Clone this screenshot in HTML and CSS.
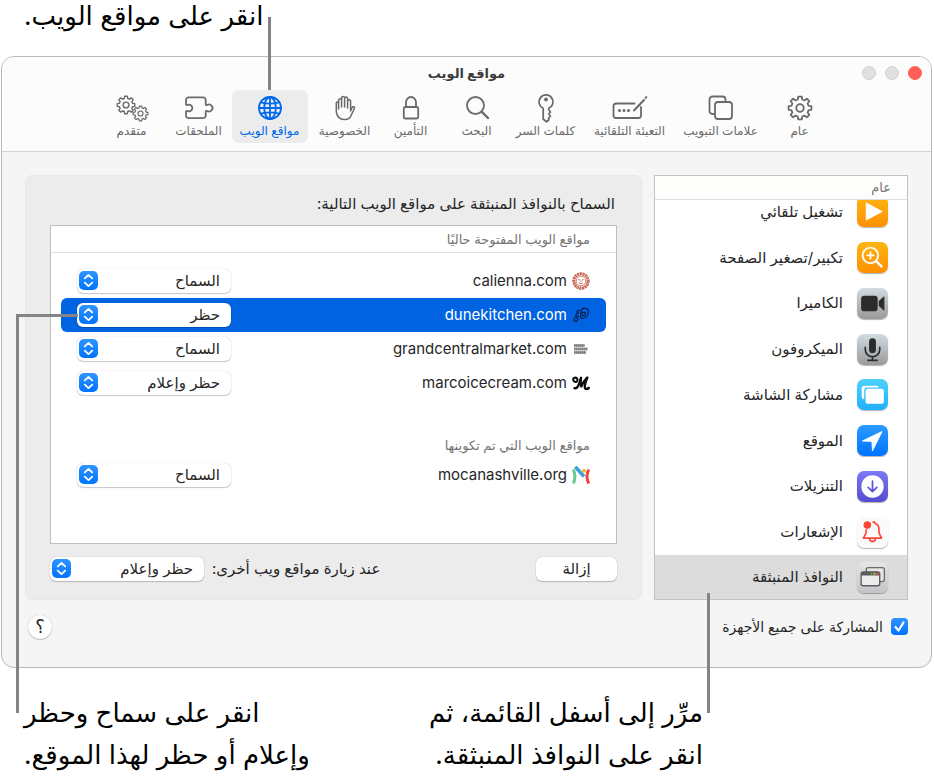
FILE: index.html
```html
<!DOCTYPE html>
<html lang="ar" dir="rtl">
<head>
<meta charset="utf-8">
<title>مواقع الويب</title>
<link rel="stylesheet" href="styles.css">
</head>
<body>
<svg class="defs" aria-hidden="true">
  <symbol id="gear" viewBox="-13 -13 26 26">
    <path d="M8.5-2.2 11.4-1.8V1.8L8.5 2.2A8.8 8.8 0 0 1 7.6 4.4L9.3 6.8 6.8 9.3 4.4 7.6A8.8 8.8 0 0 1 2.2 8.5L1.8 11.4H-1.8L-2.2 8.5A8.8 8.8 0 0 1-4.4 7.6L-6.8 9.3-9.3 6.8-7.6 4.4A8.8 8.8 0 0 1-8.5 2.2L-11.4 1.8V-1.8L-8.5-2.2A8.8 8.8 0 0 1-7.6-4.4L-9.3-6.8-6.8-9.3-4.4-7.6A8.8 8.8 0 0 1-2.2-8.5L-1.8-11.4H1.8L2.2-8.5A8.8 8.8 0 0 1 4.4-7.6L6.8-9.3 9.3-6.8 7.6-4.4A8.8 8.8 0 0 1 8.5-2.2Z"/>
    <circle r="3.8"/>
  </symbol>
  <symbol id="stepper" viewBox="0 0 19 19">
    <path d="M5.8 7.4 9.5 3.9l3.7 3.5M5.8 11.6l3.7 3.5 3.7-3.5" fill="none" stroke="#fff" stroke-width="1.8" stroke-linecap="round" stroke-linejoin="round"/>
  </symbol>
</svg>

<figure class="figure">
  <p class="callout callout-top">انقر على مواقع الويب.</p>

  <main class="window">
    <header class="titlebar">
      <h1>مواقع الويب</h1>
      <div class="lights"><i class="light close"></i><i class="light"></i><i class="light"></i></div>
      <nav class="tabs">
        <button class="tab" type="button">
          <svg class="line" width="28" height="28" viewBox="0 0 28 28"><use href="#gear" x="1" y="1" width="26" height="26"/></svg>
          <span>عام</span>
        </button>
        <button class="tab" type="button">
          <svg class="line" width="28" height="28" viewBox="0 0 28 28"><path d="M7.500 20H5.500A3 3 0 0 1 2.500 17V5.500A3 3 0 0 1 5.500 2.500H15.500A3 3 0 0 1 18.500 5.500V7.500"/><rect x="8" y="8" width="17" height="17" rx="3"/></svg>
          <span>علامات التبويب</span>
        </button>
        <button class="tab" type="button">
          <svg class="line" width="36" height="28" viewBox="0 0 36 28"><path d="M22.500 9.500H4A2.500 2.500 0 0 0 1.500 12V21.500A2.500 2.500 0 0 0 4 24H26.500A2.500 2.500 0 0 0 29 21.500V13"/><path d="m22 16.500 10-10.500M33.500 3.900l.8-.8" stroke-width="2"/><g class="solid"><circle cx="7.500" cy="16.500" r="1.500"/><circle cx="12" cy="16.500" r="1.500"/><circle cx="16.500" cy="16.500" r="1.500"/></g></svg>
          <span>التعبئة التلقائية</span>
        </button>
        <button class="tab" type="button">
          <svg class="line" width="20" height="30" viewBox="0 0 20 30"><path d="M7.200 15.300A7 7 0 1 1 12.800 15.300V17L14.500 19 12.700 21l1.700 2-1.700 2V27L10.500 28.800 7.200 26Z"/><circle class="solid" cx="10" cy="6.500" r="1.900"/></svg>
          <span>كلمات السر</span>
        </button>
        <button class="tab" type="button">
          <svg class="line" width="28" height="28" viewBox="0 0 28 28"><circle cx="12.500" cy="11.500" r="8.500"/><path d="m19 18 6 6" stroke-width="2.400"/></svg>
          <span>البحث</span>
        </button>
        <button class="tab" type="button">
          <svg class="line" width="28" height="28" viewBox="0 0 28 28"><rect x="6.800" y="13" width="14.400" height="11.500" rx="1.500"/><path d="M9 13V8.500a5 5.500 0 0 1 10 0V13"/></svg>
          <span>التأمين</span>
        </button>
        <button class="tab" type="button">
          <svg class="line" width="28" height="28" viewBox="0 0 28 28"><path stroke-width="1.500" d="M7.600 15V6.200a1.500 1.500 0 0 1 3 0V13 4a1.500 1.500 0 0 1 3 0V13 4.500a1.500 1.500 0 0 1 3 0V14 7.200a1.500 1.500 0 0 1 3 0V17l1.400-3.300c.8-1.700 3-1 2.400.8L20.300 21c-1 3-3 4.600-6.200 4.600-4.500 0-8.800-2.500-8.800-8.600V8.800a1.200 1.200 0 0 1 2.300 0"/></svg>
          <span>الخصوصية</span>
        </button>
        <button class="tab selected" type="button" aria-pressed="true">
          <svg class="line" width="28" height="28" viewBox="0 0 28 28"><circle cx="14" cy="14" r="11"/><ellipse cx="14" cy="14" rx="5.800" ry="11"/><path d="M14 3V25M3 14H25M5 8.300Q14 11 23 8.300M5 19.700Q14 17 23 19.700"/></svg>
          <span>مواقع الويب</span>
        </button>
        <button class="tab" type="button">
          <svg class="line" width="32" height="28" viewBox="0 0 32 28"><path d="M3 10.500V6A2.700 2.700 0 0 1 5.700 3.300H20A2.700 2.700 0 0 1 22.700 6V10.300Q22.800 11.500 24.200 11A3.500 3.500 0 1 1 24.200 17Q22.800 16.500 22.700 17.700V21.500A2.700 2.700 0 0 1 20 24.200H5.700A2.700 2.700 0 0 1 3 21.500V17.500Q3.300 16.500 4.800 17.200A3.400 3.400 0 1 0 4.800 10.800Q3.300 11.500 3 10.500Z"/></svg>
          <span>الملحقات</span>
        </button>
        <button class="tab" type="button">
          <svg class="line" width="34" height="28" viewBox="0 0 34 28"><use href="#gear" x="1" y="1" width="20" height="20"/><use href="#gear" x="17" y="11" width="17" height="17"/></svg>
          <span>متقدم</span>
        </button>
      </nav>
    </header>

    <div class="content">
      <aside class="sidebar">
        <h2>عام</h2>
        <div class="clip">
          <ul class="items">
            <li><svg class="app orange" viewBox="0 0 30 30"><path d="M9 7v16L24 15Z" fill="#fff" stroke="#fff" stroke-linejoin="round"/></svg><span>تشغيل تلقائي</span></li>
            <li><svg class="app orange" viewBox="0 0 30 30"><g fill="none" stroke="#fff" stroke-width="1.800" stroke-linecap="round"><circle cx="13" cy="13" r="7.500"/><path d="M13 10v6M10 13h6"/><path d="m18.700 18.700 5 5" stroke-width="2.400"/></g></svg><span>تكبير/تصغير الصفحة</span></li>
            <li><svg class="app gray" viewBox="0 0 30 30"><rect x="4" y="7.500" width="16" height="15" rx="3" fill="#2b2b2b"/><path d="m21.500 13 4.500-4.200v12.400L21.500 17Z" fill="#2b2b2b" stroke="#2b2b2b" stroke-linejoin="round"/></svg><span>الكاميرا</span></li>
            <li><svg class="app gray" viewBox="0 0 30 30"><rect x="11.700" y="4" width="6.600" height="14.500" rx="3.300" fill="#2b2b2b"/><path d="M8 13v2a7 7 0 0 0 14 0v-2M15 22v3.500M10.500 25.500h9" fill="none" stroke="#2b2b2b" stroke-width="1.600" stroke-linecap="round"/></svg><span>الميكروفون</span></li>
            <li><svg class="app sky" viewBox="0 0 30 30"><path d="M6.500 19.500A2.500 2.500 0 0 1 4.500 17V9A2.500 2.500 0 0 1 7 6.500H19A2.500 2.500 0 0 1 21.300 8.200H10A3 3 0 0 0 7 11.200V19.500Z" fill="#fff"/><rect x="8.300" y="9.500" width="17.700" height="14.500" rx="2.500" fill="#fff"/></svg><span>مشاركة الشاشة</span></li>
            <li><svg class="app blue" viewBox="0 0 30 30"><path d="M24 6.500 5.500 15.500l9 .3.500 9Z" fill="#fff" stroke="#fff" stroke-linejoin="round"/></svg><span>الموقع</span></li>
            <li><svg class="app violet" viewBox="0 0 30 30"><circle cx="15" cy="15" r="10.800" fill="#fff"/><path d="M15 9.800v10M10.800 15.800l4.200 4.200 4.200-4.200" fill="none" stroke="#5e58d6" stroke-width="1.700" stroke-linecap="round" stroke-linejoin="round"/></svg><span>التنزيلات</span></li>
            <li><svg class="app white" viewBox="0 0 30 30"><path d="M8.800 12.500v2.800L6.200 20.400h17.600L21.300 15.300V12c0-3-1.500-5-3.700-5.700l-.4-1.300H15.500M12.200 21.500a2.900 2.900 0 0 0 5.600 0" fill="none" stroke="#fc4438" stroke-width="1.600" stroke-linecap="round" stroke-linejoin="round"/><circle cx="10" cy="7.800" r="3.700" fill="#fc4438"/></svg><span>الإشعارات</span></li>
            <li class="current"><svg class="app silver" viewBox="0 0 30 30"><rect x="9" y="5.500" width="17.500" height="13.500" rx="2" fill="#e5e5e5" stroke="#6a6a6a" stroke-width="1.300"/><rect x="4" y="9.500" width="18" height="13.500" rx="2" fill="#ececec" stroke="#5c5c5c" stroke-width="1.300"/><path d="M4 13v-1.500a2 2 0 0 1 2-2h14a2 2 0 0 1 2 2V13Z" fill="#5c5c5c"/><circle cx="14" cy="11.300" r="1" fill="#32c048"/><circle cx="17" cy="11.300" r="1" fill="#f6b73c"/><circle cx="20" cy="11.300" r="1" fill="#f0524a"/></svg><span>النوافذ المنبثقة</span></li>
          </ul>
        </div>
      </aside>

      <section class="panel">
        <h3>السماح بالنوافذ المنبثقة على مواقع الويب التالية:</h3>
        <div class="sites">
          <table>
            <caption class="ruled">مواقع الويب المفتوحة حاليًا</caption>
            <tbody>
              <tr>
                <td><div class="site"><svg width="18" height="18" viewBox="0 0 18 18"><circle cx="9" cy="9" r="7.200" fill="none" stroke="#c4604f" stroke-width="3" stroke-dasharray="2.200 .5"/><circle cx="9" cy="9" r="7.200" fill="none" stroke="#f3d5cf" stroke-width=".6" stroke-dasharray="1 1.400"/><circle cx="9" cy="9" r="4.800" fill="#fff" stroke="#c4604f" stroke-width=".8"/><path d="M6.200 7.800h2M9.800 7.800h2M9 8.500v1.500M7 11q2 1.600 4 0" fill="none" stroke="#c4604f" stroke-width=".9"/></svg><span>calienna.com</span></div></td>
                <td><div class="popup"><select aria-label="calienna.com"><option>السماح</option><option>حظر</option><option>حظر وإعلام</option></select><svg><use href="#stepper"/></svg></div></td>
              </tr>
              <tr class="active">
                <td><div class="site"><svg width="18" height="18" viewBox="0 0 18 18"><path d="M8.500 6.500C10-.2 17.500 1.500 16.300 7 15 12.500 8 14 8.300 9.800c.3-3 4.700-5 5.200-2.300.2 2-2.500 3-3 1.500M7.500 4.500C4.500 4 4 7.500 7 7.300 2.500 7.500 3.500 11.500 6.500 10.500 2 10 .8 14.500 3 15.200c2.500.6 4-3 1.800-3" fill="none" stroke="#07183a" stroke-width="1.100" stroke-linecap="round"/></svg><span>dunekitchen.com</span></div></td>
                <td><div class="popup"><select aria-label="dunekitchen.com"><option>السماح</option><option selected>حظر</option><option>حظر وإعلام</option></select><svg><use href="#stepper"/></svg></div></td>
              </tr>
              <tr>
                <td><div class="site"><svg width="18" height="18" viewBox="0 0 18 18"><path d="M2 5.500H12.500M2 9H15.500M2 12.500H14" stroke="#a0a0a0" stroke-width="2.800"/><path d="M2 5.500H12.500M2 9H15.500M2 12.500H14" stroke="#707070" stroke-width="1.600" stroke-dasharray="1.200 .8"/></svg><span>grandcentralmarket.com</span></div></td>
                <td><div class="popup"><select aria-label="grandcentralmarket.com"><option>السماح</option><option>حظر</option><option>حظر وإعلام</option></select><svg><use href="#stepper"/></svg></div></td>
              </tr>
              <tr>
                <td><div class="site"><svg width="18" height="18" viewBox="0 0 18 18"><g fill="none" stroke="#0b0f0d" stroke-linecap="round" stroke-linejoin="round"><path d="M5.500 5.500C4 2.500.8 3.500 1.300 6s3.700 2.800 4.200.3" stroke-width="2.100"/><path d="M2.500 14.200c3 .8 4.800-3.700 6.500-10.200" stroke-width="2.400"/><path d="M9 4q-.8 5 .2 8.500Q11.500 7 15.300 3.600" stroke-width="2.300"/><path d="M15 4q-3.500 9-1.500 10.700 1.300.8 3.200-.7" stroke-width="2.600"/></g></svg><span>marcoicecream.com</span></div></td>
                <td><div class="popup"><select aria-label="marcoicecream.com"><option>السماح</option><option>حظر</option><option selected>حظر وإعلام</option></select><svg><use href="#stepper"/></svg></div></td>
              </tr>
            </tbody>
          </table>
          <table class="configured">
            <caption>مواقع الويب التي تم تكوينها</caption>
            <tbody>
              <tr>
                <td><div class="site"><svg width="18" height="18" viewBox="0 0 18 18"><g fill="none" stroke-width="3"><path d="M1.200 3.500Q4.500 9.500 1.500 17.500" stroke="#6cc88f"/><path d="M3.300.8 12 10.500" stroke="#3ea0dc" stroke-width="3.600"/><path d="M17 3.500Q13 9.500 16.700 17.500" stroke="#f4443c"/></g><circle cx="12" cy="4.700" r="2" fill="#f7b733"/></svg><span>mocanashville.org</span></div></td>
                <td><div class="popup"><select aria-label="mocanashville.org"><option>السماح</option><option>حظر</option><option>حظر وإعلام</option></select><svg><use href="#stepper"/></svg></div></td>
              </tr>
            </tbody>
          </table>
        </div>
        <div class="actions">
          <button class="remove" type="button">إزالة</button>
          <label for="others">عند زيارة مواقع ويب أخرى:</label>
          <div class="popup"><select id="others"><option>السماح</option><option>حظر</option><option selected>حظر وإعلام</option></select><svg><use href="#stepper"/></svg></div>
        </div>
      </section>
    </div>

    <footer class="footer">
      <label class="share">
        <span class="check"><input type="checkbox" checked><svg viewBox="0 0 17 17"><path d="m4.500 9 3 3.500 5-8" fill="none" stroke="#fff" stroke-width="2.200" stroke-linecap="round" stroke-linejoin="round"/></svg></span>
        <span>المشاركة على جميع الأجهزة</span>
      </label>
      <button class="help" type="button">؟</button>
    </footer>
  </main>

  <figcaption class="notes">
    <p class="callout callout-list">مرِّر إلى أسفل القائمة، ثم<br>انقر على النوافذ المنبثقة.</p>
    <p class="callout callout-menu">انقر على سماح وحظر<br>وإعلام أو حظر لهذا الموقع.</p>
  </figcaption>

  <i class="leader leader-tab"></i>
  <i class="leader leader-menu"></i>
  <i class="leader leader-list"></i>
</figure>
</body>
</html>
```

FILE: styles.css
```css
* { box-sizing: border-box; }

body {
  margin: 0;
  background: #fff;
  color: #262626;
  font: 15px/20px Inter, "DejaVu Sans", sans-serif;
}

h1, h2, h3, p, ul, figure { margin: 0; padding: 0; }
ul { list-style: none; }
button, select { font: inherit; color: inherit; border: 0; }

.defs { position: absolute; width: 0; height: 0; }

.figure { position: relative; }

.callout {
  color: #000;
  font-size: 26px;
  line-height: 42px;
  white-space: nowrap;
}
.callout-top {
  padding-left: 24px;
  height: 56px;
  line-height: 32px;
  text-align: left;
}

/* Window */
.window {
  margin: 0 2px 0 1px;
  border: 1px solid #b9b9b9;
  border-radius: 13px;
  background: #f5f5f5;
  overflow: hidden;
}

.titlebar {
  position: relative;
  background: #fcfcfc;
  border-bottom: 1px solid #d4d4d4;
  padding-bottom: 8px;
}
.titlebar h1 {
  font-size: 13px;
  line-height: 33px;
  font-weight: 700;
  text-align: center;
  color: #3c3c3c;
}
.lights {
  position: absolute;
  top: 9px;
  right: 9px;
  display: flex;
  gap: 9px;
}
.light {
  width: 14px;
  height: 14px;
  border-radius: 50%;
  background: #e0e0e0;
  border: 1px solid #cfcfcf;
}
.light.close { background: #ff5f57; border-color: #ff5f57; }

.tabs {
  display: grid;
  grid-template-columns: 80px 78px 104px 64px 74px 58px 74px 76px 66px 68px;
  justify-content: center;
  padding-left: 4px;
}
.tab {
  display: flex;
  flex-direction: column;
  align-items: center;
  height: 53px;
  padding: 3px 0 0;
  border-radius: 7px;
  background: none;
  color: #6a6a6a;
  font-size: 12px;
  line-height: 16px;
  white-space: nowrap;
}
.tab svg { flex: none; height: 30px; }
.tab.selected { background: #ececec; color: #0068ee; }

.line {
  fill: none;
  stroke: currentColor;
  stroke-width: 1.8px;
  stroke-linecap: round;
  stroke-linejoin: round;
}
.solid { fill: currentColor; stroke: none; }

/* Content */
.content {
  display: grid;
  grid-template-columns: 254px 1fr;
  gap: 12px;
  padding: 23px 23px 0;
}

.sidebar {
  display: flex;
  flex-direction: column;
  height: 425px;
  border: 1px solid #c2c2c2;
  background: #fff;
}
.sidebar h2 {
  padding: 0 16px;
  border-bottom: 1px solid #dedede;
  background: #fdfdfc;
  color: #757575;
  font-size: 13px;
  line-height: 23px;
  font-weight: 400;
}
.clip {
  flex: 1;
  display: flex;
  flex-direction: column;
  justify-content: flex-end;
  overflow: hidden;
}
.items {
  flex: none;
  height: 410px;
  display: grid;
  grid-template-rows: repeat(8, 1fr) 44px;
}
.items li {
  display: flex;
  align-items: center;
  gap: 14px;
  padding: 0 19px;
}
.items .current { background: #dcdcdc; }

.app {
  flex: none;
  width: 31px;
  height: 31px;
  border-radius: 7px;
  box-shadow: 0 1px 1px rgba(0, 0, 0, .3);
}
.orange { background: linear-gradient(#fdb515, #ff9000); }
.gray { background: linear-gradient(#d2dce2, #999); }
.sky { background: linear-gradient(#4fd0fb, #1fb0fa); }
.blue { background: linear-gradient(#2b9bff, #0074ff); }
.violet { background: linear-gradient(#7d78f4, #544ed0); }
.white { background: #fafafa; }
.silver { background: linear-gradient(#e6e6e6, #c4c4c8); }

.panel {
  display: flex;
  flex-direction: column;
  padding: 18px 24px;
  border: 1px solid #e8e8e8;
  border-radius: 7px;
  background: #ececec;
}
.panel h3 {
  padding: 0 2px;
  font-size: 15px;
  font-weight: 400;
  line-height: 20px;
}
.sites {
  flex: 1;
  margin-top: 11px;
  border: 1px solid #bfbfbf;
  background: #fff;
}
.sites table {
  width: 100%;
  border-spacing: 0;
  padding: 11px 10px 0;
}
.sites .configured { margin-top: 32px; padding-top: 0; }
.sites caption {
  padding: 0 26px;
  color: #757575;
  font-size: 13px;
  line-height: 26px;
  text-align: right;
}
.sites .ruled { border-bottom: 1px solid #dedede; }
.sites td { height: 34px; padding: 0 16px; vertical-align: middle; }
.sites td:last-child { width: 186px; }
.site {
  display: flex;
  align-items: center;
  gap: 5px;
}
.active td { background: #0063e1; color: #fff; }
.active td:first-child { border-radius: 0 6px 6px 0; }
.active td:last-child { border-radius: 6px 0 0 6px; }

.popup { position: relative; width: 154px; }
.popup select {
  appearance: none;
  display: block;
  width: 100%;
  height: 24px;
  padding: 0 11px 0 26px;
  border-radius: 6px;
  background: #fff;
  color: #262626;
  box-shadow: 0 0 1px rgba(0, 0, 0, .3), 0 1px 1px rgba(0, 0, 0, .2);
}
.popup svg {
  position: absolute;
  top: 2px;
  left: 2px;
  width: 19px;
  height: 19px;
  border-radius: 5px;
  background: linear-gradient(#2f94ff, #0074ff);
  pointer-events: none;
}

.actions {
  display: flex;
  align-items: center;
  gap: 8px;
  margin-top: 13px;
}
.remove {
  width: 81px;
  height: 24px;
  margin-left: auto;
  border-radius: 6px;
  background: #fff;
  box-shadow: 0 0 1px rgba(0, 0, 0, .3), 0 1px 1px rgba(0, 0, 0, .2);
}

.footer {
  display: flex;
  align-items: center;
  justify-content: space-between;
  height: 67px;
  padding: 0 23px 14px 26px;
}
.share { display: flex; align-items: center; gap: 8px; font-size: 14px; }
.check { position: relative; display: flex; }
.check input {
  appearance: none;
  width: 17px;
  height: 17px;
  margin: 0;
  border-radius: 4px;
  background: linear-gradient(#2f94ff, #0074ff);
}
.check svg {
  position: absolute;
  inset: 0;
  pointer-events: none;
}
.help {
  width: 24px;
  height: 24px;
  padding: 0;
  border-radius: 50%;
  background: #fff;
  font-size: 18px;
  box-shadow: 0 0 1px rgba(0, 0, 0, .3), 0 1px 1px rgba(0, 0, 0, .2);
}

/* Notes below the window */
.notes {
  display: flex;
  justify-content: space-between;
  padding: 24px 231px 0 24px;
}
.callout-list { text-align: right; }
.callout-menu { text-align: left; }

/* Leader lines drawn over the window */
.leader { position: absolute; border: 0 solid #848484; }
.leader-tab { left: 268px; top: 17px; height: 73px; border-left-width: 3px; }
.leader-menu { left: 16px; top: 314px; width: 62px; height: 399px; border-width: 3px 0 0 3px; }
.leader-list { left: 707px; top: 593px; height: 120px; border-left-width: 3px; }
```
